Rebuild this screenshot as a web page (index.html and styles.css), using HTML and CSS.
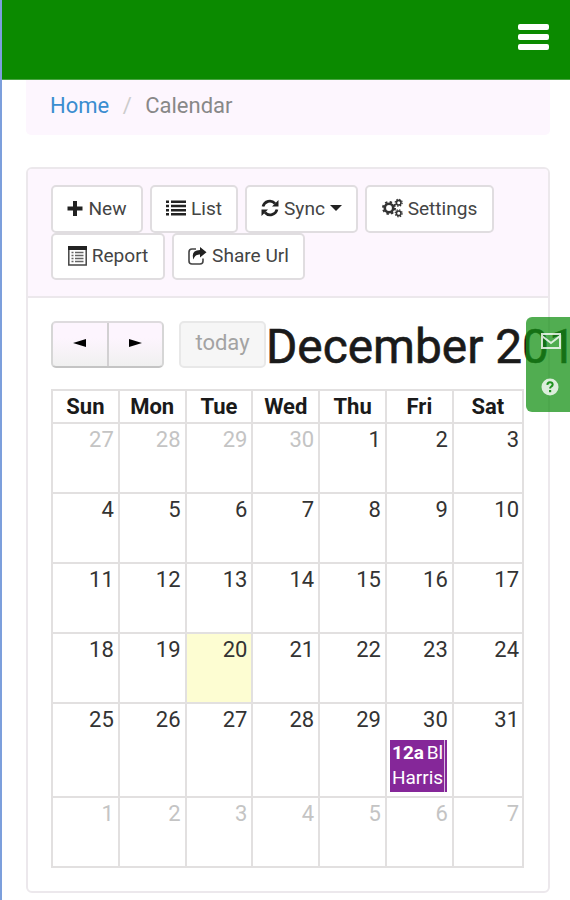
FILE: index.html
```html
<!DOCTYPE html>
<html lang="en">
<head>
  <meta charset="UTF-8">
  <title>Calendar</title>
  <link rel="stylesheet" href="styles.css">
</head>
<body>
  <header class="navbar">
    <button class="menu-toggle" aria-label="Menu">
      <span></span>
      <span></span>
      <span></span>
    </button>
  </header>

  <ol class="breadcrumb">
    <li><a href="#">Home</a></li>
    <li class="separator">/</li>
    <li>Calendar</li>
  </ol>

  <div class="panel">
    <div class="panel-heading">
      <button class="btn btn-new">
        <svg class="icon" width="16" height="17" viewBox="0 0 16 17"><path d="M6 1h4v5.500h5.500v4H10V16H6v-5.500H.5v-4H6z"/></svg>
        New
      </button>
      <button class="btn btn-list">
        <svg class="icon" width="20" height="16" viewBox="0 0 20 16"><path d="M0 .5h3v2.500H0zM0 4.800h3v2.500H0zM0 9h3v2.500H0zM0 13h3v2.500H0zM5 .5h15v2.500H5zM5 4.800h15v2.500H5zM5 9h15v2.500H5zM5 13h15v2.500H5z"/></svg>
        List
      </button>
      <button class="btn btn-sync">
        <svg class="icon" width="18" height="18" viewBox="0 0 18 18"><path d="M2 7.500A7 7 0 0 1 14 4.500M16 10.500A7 7 0 0 1 4 13.500" fill="none" stroke="#222" stroke-width="2.700"/><path d="M17.500 1v6.500H11zM.5 17v-6.500H7z"/></svg>
        Sync
        <span class="caret"></span>
      </button>
      <button class="btn btn-settings">
        <svg class="icon" width="21" height="20" viewBox="0 0 21 20">
          <g fill="none" stroke="#333">
            <circle cx="7" cy="10" r="4.200" stroke-width="2.600"/>
            <circle cx="7" cy="10" r="6" stroke-width="2" stroke-dasharray="2.360 2.350"/>
            <circle cx="16.700" cy="4.700" r="2.300" stroke-width="1.600"/>
            <circle cx="16.700" cy="4.700" r="3.500" stroke-width="1.200" stroke-dasharray="1.370 1.380"/>
            <circle cx="16.700" cy="15.300" r="2.300" stroke-width="1.600"/>
            <circle cx="16.700" cy="15.300" r="3.500" stroke-width="1.200" stroke-dasharray="1.370 1.380"/>
          </g>
        </svg>
        Settings
      </button>
      <button class="btn btn-report">
        <svg class="icon" width="19" height="20" viewBox="0 0 19 20"><path d="M.8 1h17.400v18H.8z" fill="none" stroke="#444" stroke-width="1.500"/><path d="M0 0h19v4H0z"/><path d="M3.500 6.500h2M7 6.500h8.500M3.500 9.500h2M7 9.500h8.500M3.500 12.500h2M7 12.500h8.500M3.500 15.500h2M7 15.500h8.500" stroke="#666" stroke-width="1.400"/></svg>
        Report
      </button>
      <button class="btn btn-share">
        <svg class="icon" width="19" height="18" viewBox="0 0 19 18"><path d="M8 2H4Q1 2 1 5v9q0 3 3 3h8q3 0 3-3v-2.500" fill="none" stroke="#444" stroke-width="1.600"/><path d="M12 0l6.500 5.200L12 10.500V7.500Q7 7 5.500 12.500 2.500 3.500 12 3z"/></svg>
        Share Url
      </button>
    </div>

    <div class="panel-body">
      <div class="toolbar">
        <div class="button-group">
          <button class="nav-btn" aria-label="Previous"><svg width="13" height="8" viewBox="0 0 13 8"><path d="M13 0v8L0 4z"/></svg></button>
          <button class="nav-btn" aria-label="Next"><svg width="13" height="8" viewBox="0 0 13 8"><path d="M0 0v8l13-4z"/></svg></button>
        </div>
        <button class="today-btn" disabled>today</button>
        <h2>December 2016</h2>
      </div>

      <table class="calendar">
        <colgroup>
          <col class="day"><col class="day"><col class="day"><col class="day"><col class="day"><col class="day"><col>
        </colgroup>
        <thead>
          <tr><th>Sun</th><th>Mon</th><th>Tue</th><th>Wed</th><th>Thu</th><th>Fri</th><th>Sat</th></tr>
        </thead>
        <tbody>
          <tr><td class="other">27</td><td class="other">28</td><td class="other">29</td><td class="other">30</td><td>1</td><td>2</td><td>3</td></tr>
          <tr><td>4</td><td>5</td><td>6</td><td>7</td><td>8</td><td>9</td><td>10</td></tr>
          <tr><td>11</td><td>12</td><td>13</td><td>14</td><td>15</td><td>16</td><td>17</td></tr>
          <tr><td>18</td><td>19</td><td class="today">20</td><td>21</td><td>22</td><td>23</td><td>24</td></tr>
          <tr class="tall">
            <td>25</td><td>26</td><td>27</td><td>28</td><td>29</td>
            <td>30
              <div class="event"><div class="event-text"><b>12a</b> Bl<br>Harris</div></div>
            </td>
            <td>31</td>
          </tr>
          <tr><td class="other">1</td><td class="other">2</td><td class="other">3</td><td class="other">4</td><td class="other">5</td><td class="other">6</td><td class="other">7</td></tr>
        </tbody>
      </table>
    </div>
  </div>

  <div class="side-tab">
    <svg width="20" height="16" viewBox="0 0 20 16"><path d="M1 1h18v14H1zM1 3l9 7 9-7" fill="none" stroke="#fff" stroke-width="2"/></svg>
    <svg width="18" height="18" viewBox="0 0 18 18"><circle cx="9" cy="9" r="8.500" fill="#fff"/><path d="M6.300 6.800Q6.500 4.200 9 4.200T11.700 6.500Q11.700 7.800 10.300 8.500 9.100 9.200 9.100 10.500" fill="none" stroke="#148c14" stroke-width="2"/><path d="M8 12h2.200v2.200H8z" fill="#148c14"/></svg>
  </div>
</body>
</html>
```
FILE: styles.css
```css
* {
  box-sizing: border-box;
}
body {
  margin: 0;
  height: 900px;
  overflow: hidden;
  border-left: 2px solid #7c9fdc;
  background-color: #fff;
  font-family: Roboto, sans-serif;
  font-size: 22px;
  color: #333;
}
button {
  font-family: inherit;
}
.navbar {
  height: 80px;
  margin-left: -2px;
  padding: 24px 21px 0 0;
  display: flex;
  justify-content: flex-end;
  align-items: flex-start;
  background-color: #0b8a00;
  border-left: 2px solid #1a80c4;
  border-bottom: 1px solid #4aa543;
}
.menu-toggle {
  width: 31px;
  padding: 0;
  border: none;
  background: none;
  display: flex;
  flex-direction: column;
  gap: 4px;
}
.menu-toggle span {
  height: 6px;
  border-radius: 2px;
  background-color: #fff;
}
.breadcrumb {
  display: flex;
  height: 55px;
  margin: 0 20px 32px 24px;
  padding: 12px 24px 0;
  list-style: none;
  line-height: 28px;
  background-color: #fdf6fe;
  border-radius: 0 0 5px 5px;
  color: #888;
}
.breadcrumb a {
  color: #3a8dd0;
  text-decoration: none;
}
.breadcrumb .separator {
  width: 36px;
  text-align: center;
  color: #ccc;
}
.panel {
  height: 726px;
  margin: 0 20px 0 24px;
  border: 2px solid #ece8ec;
  border-radius: 6px;
}
.panel-heading {
  display: flex;
  flex-wrap: wrap;
  align-content: flex-start;
  column-gap: 7px;
  height: 129px;
  padding: 16px 40px 0 23px;
  background-color: #fdf6fe;
  border-bottom: 2px solid #ece8ec;
  border-radius: 4px 4px 0 0;
}
.btn {
  display: flex;
  align-items: center;
  justify-content: center;
  gap: 5px;
  height: 47.5px;
  padding: 0 0 1px;
  border: 2px solid #e0dde0;
  border-radius: 5px;
  background-color: #fff;
  color: #444;
  font-size: 19.1px;
  white-space: nowrap;
}
.icon {
  fill: #222;
}
.btn-new { width: 92px; }
.btn-list { width: 88px; }
.btn-sync { width: 113px; }
.btn-settings { width: 129px; }
.btn-report { width: 114px; }
.btn-share { width: 133px; }
.caret {
  border-top: 6px solid #222;
  border-left: 6px solid transparent;
  border-right: 6px solid transparent;
}
.panel-body {
  padding: 23px 24px 0 23px;
}
.toolbar {
  display: flex;
  height: 47px;
  margin-bottom: 21px;
}
.button-group {
  display: flex;
  flex: none;
  width: 113px;
  margin-right: 15px;
  border: 2px solid #ccc;
  border-color: #dedbde #d6d6d6 #c4c4c4;
  border-radius: 5px;
  background: linear-gradient(#fdf5fe 35%, #f0f0f0);
}
.nav-btn {
  flex: 1;
  padding: 0 0 4px;
  border: none;
  background: none;
}
.nav-btn + .nav-btn {
  border-left: 2px solid #d2d0d2;
}
.today-btn {
  width: 87px;
  flex: none;
  padding: 0 0 4px;
  border: 2px solid #e8e8e8;
  border-radius: 5px;
  background-color: #f6f6f6;
  color: #a3a3a3;
  font-size: 22px;
}
.toolbar h2 {
  margin: 0;
  font-size: 47.8px;
  font-weight: 400;
  line-height: 52px;
  white-space: nowrap;
  color: #1a1a1a;
  -webkit-text-stroke: 0.6px #1a1a1a;
}
.calendar {
  width: 473px;
  table-layout: fixed;
  border-collapse: collapse;
}
.calendar .day {
  width: 66.8px;
}
.calendar th,
.calendar td {
  border: 2px solid #e2e0e0;
  padding: 0;
  line-height: 26px;
}
.calendar th {
  height: 33px;
  color: #1a1a1a;
  font-weight: 700;
}
.calendar td {
  height: 70px;
  padding: 3px 4px 0 3px;
  text-align: right;
  vertical-align: top;
}
.calendar td:last-child {
  padding-right: 3px;
}
.calendar .tall td {
  height: 94px;
}
.calendar .other {
  color: #c4c4c4;
}
.calendar .today {
  background-color: #fdfdd2;
}
.event {
  height: 52px;
  margin: 7px 1px 0 0;
  padding-right: 2px;
  background-color: #852799;
  color: #fff;
  font-size: 19px;
  line-height: 25px;
  text-align: left;
}
.event-text {
  height: 52px;
  padding-left: 2px;
  border-right: 1px solid #d9bce0;
  white-space: nowrap;
  word-spacing: -2px;
}
/* floating contact / help tab */
.side-tab {
  position: absolute;
  top: 317px;
  right: 0;
  width: 44px;
  height: 95px;
  padding: 16px 0 0 15px;
  display: flex;
  flex-direction: column;
  gap: 29px;
  border-radius: 6px 0 0 6px;
  background-color: rgba(20, 145, 20, 0.74);
}
.side-tab svg {
  opacity: 0.8;
}
```
